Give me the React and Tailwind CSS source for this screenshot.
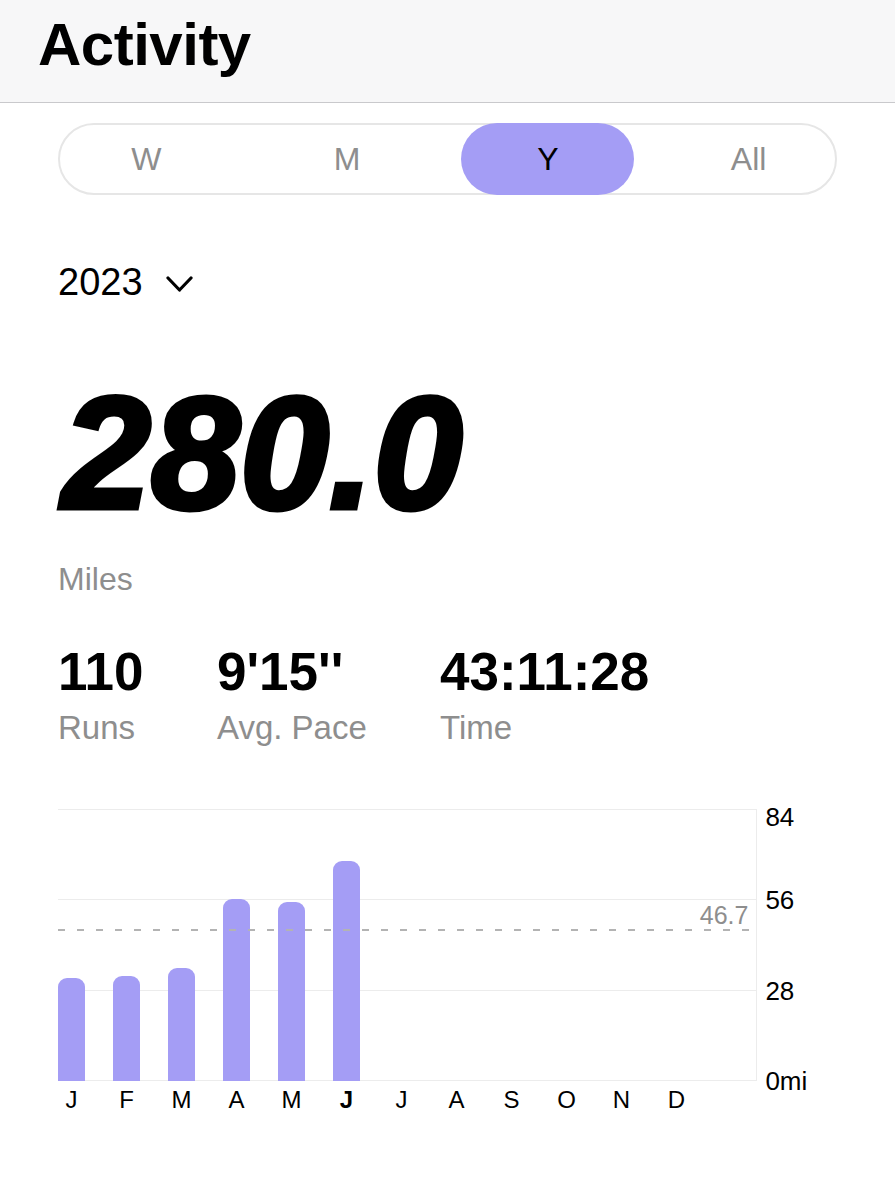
import { useState } from 'react';

const tabs = ['W', 'M', 'Y', 'All'];

const months = [
    { label: 'J', miles: 32 },
    { label: 'F', miles: 32.5 },
    { label: 'M', miles: 35 },
    { label: 'A', miles: 56.4 },
    { label: 'M', miles: 55.5 },
    { label: 'J', miles: 68.2, current: true },
    { label: 'J', miles: 0 },
    { label: 'A', miles: 0 },
    { label: 'S', miles: 0 },
    { label: 'O', miles: 0 },
    { label: 'N', miles: 0 },
    { label: 'D', miles: 0 },
];

const stats = [
    { value: '110', label: 'Runs', width: 'w-[159px]' },
    { value: "9'15''", label: 'Avg. Pace', width: 'w-[223px]' },
    { value: '43:11:28', label: 'Time', width: '' },
];

const MAX = 84;
const PLOT_H = 271;
const ticks = [84, 56, 28, 0];
const AVG = 46.7;

export default function App() {
    const [tab, setTab] = useState('Y');

    return (
        <div className="min-h-[1200px] bg-white text-black font-['Liberation_Sans',Arial,sans-serif]">
            {/* Header */}
            <div className="h-[103px] bg-[#f7f7f8] border-b border-[#c9c9cc] pl-[38px] pt-[15px]">
                <h1 className="text-[60px] leading-none font-bold tracking-[-0.5px]">Activity</h1>
            </div>

            <div className="px-[58px]">
                {/* Period tabs */}
                <div className="mt-[20px] h-[72px] rounded-full border-2 border-[#e6e6e6]">
                    <div className="-mx-[14px] -my-[2px] grid h-[72px] grid-cols-4">
                        {tabs.map((t) => (
                            <div key={t} className="flex items-center justify-center">
                                <button
                                    onClick={() => setTab(t)}
                                    className={
                                        tab === t
                                            ? 'h-[72px] w-[173px] rounded-full bg-[#a49df5] text-[32px] text-black'
                                            : 'h-[72px] w-[173px] rounded-full text-[32px] text-[#8e8e8e]'
                                    }
                                >
                                    {t}
                                </button>
                            </div>
                        ))}
                    </div>
                </div>

                {/* Year selector */}
                <div className="mt-[68px] flex items-center gap-[23px]">
                    <span className="text-[38px] leading-none">2023</span>
                    <svg width="27" height="17" viewBox="0 0 27 17" className="mt-[4px]">
                        <polyline points="2,2 13.5,14 25,2" fill="none" stroke="black" strokeWidth="3.2" strokeLinecap="round" strokeLinejoin="round" />
                    </svg>
                </div>

                {/* Total distance */}
                <div className="mt-[72px] pl-[4px] text-[160px] leading-none font-bold italic tracking-[0px] [-webkit-text-stroke:5px_black]">
                    280.0
                </div>
                <div className="mt-[30px] text-[32px] leading-none text-[#8e8e8e]">Miles</div>

                {/* Stats */}
                <div className="mt-[50px] flex">
                    {stats.map(({ value, label, width }) => (
                        <div key={label} className={width}>
                            <div className="text-[53px] leading-none font-bold">{value}</div>
                            <div className="mt-[13px] text-[33px] leading-none text-[#8e8e8e]">{label}</div>
                        </div>
                    ))}
                </div>

                {/* Chart */}
                <div className="mt-[65px] flex">
                    <div className="w-[703px]">
                        <div className="relative h-[272px] border-r border-[#ececec]">
                            <div className="flex h-full flex-col justify-between">
                                {ticks.map((t) => (
                                    <div key={t} className="h-px bg-[#ececec]" />
                                ))}
                            </div>
                            <div className="absolute inset-x-0 bottom-0 flex items-end gap-[28px]">
                                {months.map((m, i) => (
                                    <div key={i} className="w-[27px]">
                                        {m.miles > 0 && (
                                            <div
                                                className="rounded-t-[9px] bg-[#a49df5]"
                                                style={{ height: (m.miles / MAX) * PLOT_H }}
                                            />
                                        )}
                                    </div>
                                ))}
                            </div>
                            <div
                                className="absolute left-0 right-[6px] h-[1.5px] bg-[repeating-linear-gradient(to_right,#b3b3b3_0_7px,transparent_7px_19px)]"
                                style={{ top: PLOT_H - (AVG / MAX) * PLOT_H }}
                            />
                            <div
                                className="absolute right-[8px] text-[25px] leading-none text-[#8e8e8e]"
                                style={{ top: PLOT_H - (AVG / MAX) * PLOT_H - 26 }}
                            >
                                46.7
                            </div>
                        </div>
                        <div className="mt-[7px] flex gap-[28px]">
                            {months.map((m, i) => (
                                <div
                                    key={i}
                                    className={`w-[27px] text-center text-[24px] leading-none ${m.current ? 'font-bold' : ''}`}
                                >
                                    {m.label}
                                </div>
                            ))}
                        </div>
                    </div>
                    <div className="relative h-[272px] w-[80px]">
                        {ticks.map((t, i) => (
                            <div
                                key={t}
                                className="absolute left-[8px] text-[26px] leading-none"
                                style={{ top: (i * PLOT_H) / 3 - (i === 0 ? 5 : 12) }}
                            >
                                {t === 0 ? '0mi' : t}
                            </div>
                        ))}
                    </div>
                </div>
            </div>
        </div>
    );
}
